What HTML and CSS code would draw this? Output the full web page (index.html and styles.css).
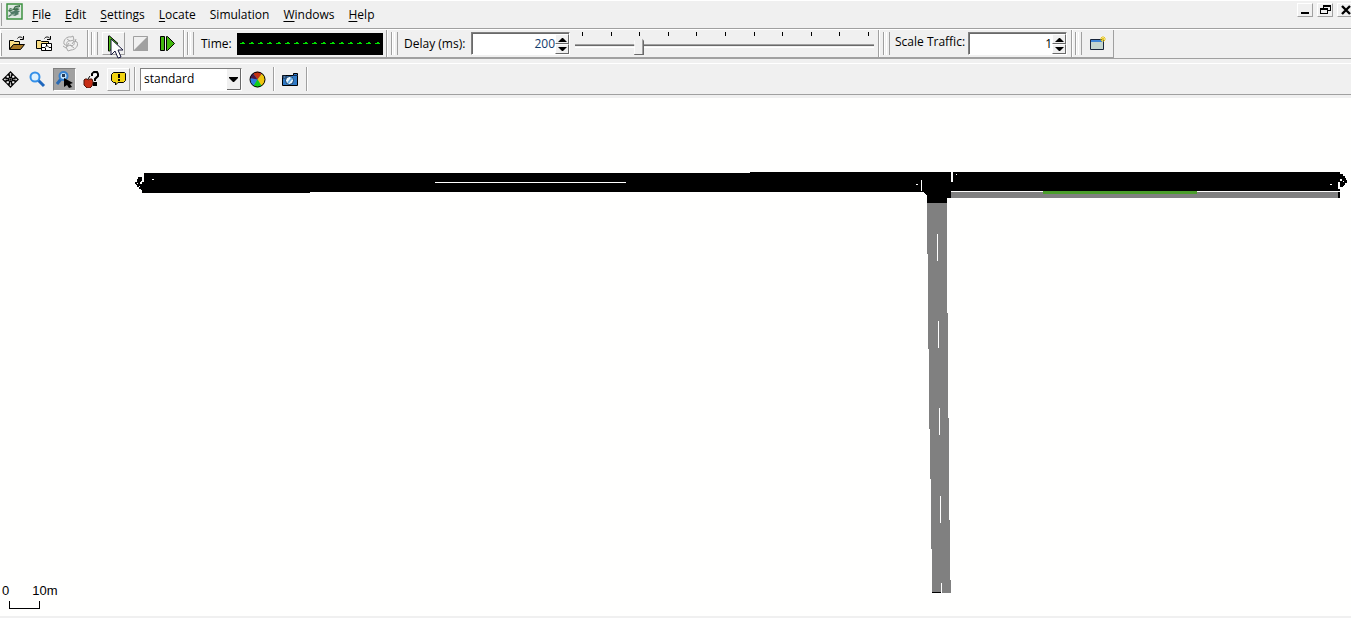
FILE: index.html
```html
<!DOCTYPE html>
<html lang="en">
<head>
<meta charset="utf-8">
<title>Traffic simulation</title>
<link rel="stylesheet" href="styles.css">
</head>
<body>
<header class="menubar">
  <svg class="app-icon" width="17" height="17" viewBox="0 0 17 17"><rect x="1" y="1" width="15" height="15" fill="#dfe9e2" stroke="#3c9140" stroke-width="1.5"/><path d="M2 8l2-3 3 1 2-3 5-1v2l-3 1 3 1-4 2-3-1-3 2z" fill="#3f6e4c"/><path d="M2 13l3-2-1-2 4-1 2-1 4 1-2 2 1 1-4 2-3-1-3 2z" fill="#4f7a66"/><path d="M3 6l4 1M9 5l4-1M5 12l4-1" stroke="#8fae9c"/></svg>
  <nav class="menus">
    <button class="menu"><u>F</u>ile</button>
    <button class="menu"><u>E</u>dit</button>
    <button class="menu"><u>S</u>ettings</button>
    <button class="menu"><u>L</u>ocate</button>
    <button class="menu">Simulation</button>
    <button class="menu"><u>W</u>indows</button>
    <button class="menu"><u>H</u>elp</button>
  </nav>
  <div class="window-buttons">
    <button class="window-button" aria-label="Minimize"><svg width="13" height="12"><path d="M3 8h8v2H3z"/></svg></button>
    <button class="window-button" aria-label="Restore"><svg width="13" height="12" fill="none" stroke="#000" shape-rendering="crispEdges"><path d="M5 1h8v2H5zM5 1h1v4H5zM12 1h1v6h-1zM10 6h3v1h-3zM2 4h8v2H2zM2 4h1v6H2zM9 4h1v6H9zM2 9h8v1H2z" fill="#000" stroke="none"/></svg></button>
    <button class="window-button" aria-label="Close"><svg width="13" height="12"><path d="M4 2l8 8M12 2l-8 8" stroke="#000" stroke-width="2.400"/></svg></button>
  </div>
</header>

<div class="toolbar main-toolbar">
  <div class="group files">
    <button class="tool" aria-label="Open simulation"><svg width="17" height="17" viewBox="0 0 17 17"><path d="M1.500 14V5.500h4l1 1h5V9.500H6z" fill="#f8dc83" stroke="#000"/><path d="M1.500 14.500l4-5h11l-4 5z" fill="#a87824" stroke="#000"/><path d="M9.500 3.500c1-2 4-2 5.500 0M15.500 1v3.500H12" fill="none" stroke="#000"/></svg></button>
    <button class="tool" aria-label="Open network"><svg width="17" height="17" viewBox="0 0 17 17"><path d="M1.500 13.500v-8h4l1 1h7v7z" fill="#f8dc83" stroke="#000"/><path d="M9.500 3.500c1-2 4-2 5.500 0M15.500 1v3.500H12" fill="none" stroke="#000"/><path d="M6.500 8.500h10v7h-10z" fill="#fff" stroke="#000"/><path d="M7 12.500h3l2-2 2 2h3M11.500 9v2M10.500 13v3" fill="none" stroke="#000"/></svg></button>
    <button class="tool" aria-label="Reload"><svg width="17" height="17" viewBox="0 0 17 17" fill="none" stroke="#a6a6a6"><path d="M2 9c-1-4 3-8 7-7l2-1 1 4-4 1c-2-1-4 2-3 4M15 7c2 4-2 8-6 8l-3 1-2-4 4-2c3 2 5-1 4-3M2 9l3 2 2-3M15 7l-3-1-2 3M5 4l3 2M12 13l-4-3M1 11l3 2M14 4l-1 3"/></svg></button>
  </div>
  <div class="group run">
    <span class="grip"></span>
    <button class="tool raised" aria-label="Run"><svg width="17" height="17" viewBox="0 0 17 17"><path d="M3.500 1v15h1l8.500-7.500L4.500 1z" fill="#4dbb16" stroke="#000"/></svg></button>
    <button class="tool" aria-label="Stop"><svg width="17" height="17" viewBox="0 0 17 17"><path d="M1.500 1.500h14v14h-14z" fill="#f0f0f0" stroke="#a0a0a0"/><path d="M16 1v15H1z" fill="#a0a0a0"/></svg></button>
    <button class="tool" aria-label="Step"><svg width="17" height="17" viewBox="0 0 17 17" fill="#43b80e" stroke="#000"><path d="M1.500 1.500h4v14h-4zM7.500 1.500v14h1l7-7-7-7z"/></svg></button>
    <svg class="pointer" width="14" height="22" viewBox="0 0 14 22"><path d="M1 1v16l4-4 3 7 3-1-3-7h5z" fill="#fff" stroke="#18183c"/></svg>
  </div>
  <div class="group time">
    <span class="grip"></span>
    <span class="time-label">Time:</span>
    <svg class="lcd" role="img" aria-label="Simulation time" width="146" height="22" shape-rendering="crispEdges">
      <rect width="146" height="22"/>
      <path d="M3 10.500h141" stroke="#00e000" stroke-dasharray="5 4"/>
      <path d="M5 9.500h139" stroke="#00e000" stroke-dasharray="2 7"/>
    </svg>
  </div>
  <div class="group delay">
    <span class="grip"></span>
    <label for="delay">Delay (ms):</label>
    <div class="spinner">
      <input id="delay" class="active" type="text" value="200">
      <div class="arrows">
        <button aria-label="Increase delay"><svg width="9" height="5"><path d="M0 5l4-4h1l4 4z"/></svg></button>
        <button aria-label="Decrease delay"><svg width="9" height="5"><path d="M0 0h9L5 4H4z"/></svg></button>
      </div>
    </div>
    <div class="slider">
      <div class="ticks"><i></i><i></i><i></i><i></i><i></i><i></i><i></i><i></i><i></i><i></i><i></i></div>
      <input type="range" min="0" max="1000" value="205" aria-label="Delay">
    </div>
  </div>
  <div class="group scale">
    <span class="grip"></span>
    <label for="scale">Scale Traffic:</label>
    <div class="spinner">
      <input id="scale" type="text" value="1">
      <div class="arrows">
        <button aria-label="Increase scale"><svg width="9" height="5"><path d="M0 5l4-4h1l4 4z"/></svg></button>
        <button aria-label="Decrease scale"><svg width="9" height="5"><path d="M0 0h9L5 4H4z"/></svg></button>
      </div>
    </div>
  </div>
  <div class="group views">
    <span class="grip"></span>
    <button class="tool" aria-label="New view"><svg width="17" height="17" viewBox="0 0 17 17"><path d="M1.500 4.500h13v10h-13z" fill="#c3d5cf" stroke="#17243a"/><path d="M2 5h11v2H2z" fill="#3e86d8"/><path d="M14 1v6M11 4h6M12 2l4 4M16 2l-4 4" stroke="#e8c71c"/></svg></button>
  </div>
</div>

<div class="toolbar view-toolbar">
  <button class="tool" aria-label="Recenter view"><svg width="17" height="17" viewBox="0 0 17 17" fill="#fff" stroke="#000" stroke-width="1.300"><path d="M8.500 1L5.500 4h2v2.500h2V4h2zM8.500 16l-3-3h2v-2.500h2V13h2zM1 8.500l3-3v2h2.500v2H4v2zM16 8.500l-3-3v2h-2.500v2H13v2z"/><path d="M8 8h1v1H8z"/></svg></button>
  <button class="tool" aria-label="Edit viewport"><svg width="17" height="17" viewBox="0 0 17 17"><path d="M9 9l6 6" stroke="#1f67bd" stroke-width="3"/><circle cx="6" cy="6" r="4.500" fill="#dff1fd" stroke="#3590e8" stroke-width="2"/></svg></button>
  <button class="tool pressed" aria-label="Zoom style"><svg width="17" height="17" viewBox="0 0 17 17"><path d="M5 8l-4 5" stroke="#2769b4" stroke-width="3"/><circle cx="7.500" cy="5" r="4" fill="#c4e2f8" stroke="#3580cf" stroke-width="2"/><path d="M6 3h3v3H6z" fill="#263c58"/><path d="M8 7v9l3-2 2 3 3-1-2-3 3-1z"/></svg></button>
  <button class="tool" aria-label="Show tooltips"><svg width="17" height="17" viewBox="0 0 17 17"><path d="M9 5V3l2-2h3l1 2v2l-3 3v2M11 12h2v2h-2z" fill="none" stroke="#000" stroke-width="2"/><path d="M10 3h1v2l3-2" stroke="#fff" fill="none"/><path d="M5 8l2-3" stroke="#000"/><path d="M2 8h2l1 1 2-1h2l1 3-1 4-2 2H4l-3-3V9z" fill="#c72e16" stroke="#4d160d"/></svg></button>
  <button class="tool raised" aria-label="Show messages"><svg width="17" height="17" viewBox="0 0 17 17"><path d="M3.500 1.500h11l1 1v7l-2 2H8L5.500 14v-2.500h-2l-2-2v-6z" fill="#f1d311" stroke="#000"/><path d="M8 3h2v4H8zM8 8h2v2H8z"/></svg></button>
  <span class="separator"></span>
  <div class="combo">
    <select aria-label="Coloring scheme"><option>standard</option></select>
    <svg class="combo-arrow" width="14" height="21" viewBox="0 0 14 21"><path d="M0 0h14v21H0z" fill="#f0f0f0"/><path d="M0 20.500h13.500V0" fill="none" stroke="#696969"/><path d="M2 8h9v1l-4 4H6L2 9z"/></svg>
  </div>
  <button class="tool" aria-label="Edit coloring schemes"><svg width="17" height="17" viewBox="0 0 17 17"><circle cx="8.500" cy="8.500" r="7.500" fill="#2f7fe0"/><path d="M8.500 8.500L4 2.500A7.500 7.500 0 0 1 13 2.500z" fill="#c43210"/><path d="M8.500 8.500L13 2.500A7.500 7.500 0 0 1 12.500 15z" fill="#eec50d"/><path d="M8.500 8.500L12.500 15A7.500 7.500 0 0 1 4.500 15z" fill="#0fcf16"/><path d="M8.500 8.500L1 7A7.500 7.500 0 0 1 4 2.500z" fill="#4c1742"/><circle cx="8.500" cy="8.500" r="7.500" fill="none" stroke="#000"/></svg></button>
  <span class="separator"></span>
  <button class="tool" aria-label="Make snapshot"><svg width="17" height="17" viewBox="0 0 17 17"><path d="M.5 4.500h11v-2h4v12H.5z" fill="#2f7ac7" stroke="#000"/><path d="M11 4.500h5M1 5h3v2H1z" stroke="#102c50" fill="#9ac7ef"/><circle cx="7.500" cy="9.500" r="4" fill="#e7f6ff" stroke="#06305d"/><path d="M6 12l4-5" stroke="#66aee8" stroke-width="2"/></svg></button>
  <span class="separator"></span>
</div>

<main class="canvas">
  <svg class="network" viewBox="0 0 1351 518" preserveAspectRatio="xMinYMin meet" shape-rendering="crispEdges">
    <path d="M951 94h388v6H951zM927 104h20v60l1 100 1 110 1 95 1 26h-19l-1-90-2-100-1-110-1-80z" fill="#808080"/>
    <path d="M144 75h606v-1h201v9h2v-9h387v19H951v7h-4v5H927v-7l-3-4H310v1H142V84h2z"/>
    <path d="M1043 93h154v3h-154z" fill="#4a9e2b"/>
    <path d="M951 74h2v10h-2zM921 82h1v11h-1zM435 84h191v1H435zM152 81h2v1h-2zM916 86h2v1h-2zM956 76h1v1h-1zM1330 86h2v1h-2z" fill="#fff"/>
    <path d="M937 136h1v27h-1zM938 223h1v27h-1zM939 310h1v27h-1zM940 398h1v27h-1zM941 485h1v10h-1z" fill="#fff"/>
    <path d="M932 494h9v1h-9zM1338 94h2v6h-2zM138 79h4v4h-1v1h-1v2h3v6h-2v-1h-2v-2h-2v-2h-1v-1h-1v-2h2v-3h1zM1340 76h3v2h2v2h1v2h1v3h-2v2h-1v1h-1v1h-3v-6h2v-2h-2z"/>
    <path d="M1338 84h2v7h-2zM137 85h1v1h-1zM139 88h1v1h-1zM1343 83h1v1h-1z" fill="#fff"/>
  </svg>
  <div class="ruler">
    <div class="ruler-labels"><span>0</span><span>10m</span></div>
    <div class="ruler-bar"></div>
  </div>
</main>
<footer class="statusbar"></footer>
</body>
</html>
```
FILE: styles.css
```css
* { box-sizing: border-box; }

body {
  margin: 0;
  min-height: 100vh;
  display: flex;
  flex-direction: column;
  overflow: hidden;
  background: #f0f0f0;
  color: #000;
  font: 12px/16px "Open Sans", "Noto Sans", sans-serif;
}

button, input, select { font: inherit; color: inherit; border: 0; padding: 0; margin: 0; }
button { background: #f0f0f0; }
svg { display: block; flex: none; }

.menubar {
  display: flex;
  align-items: flex-start;
  height: 29px;
  border-top: 1px solid #fff;
  border-bottom: 1px solid #a0a0a0;
  background: linear-gradient(#a0a0a0, #a0a0a0) 1px 2px / 1px 23px no-repeat;
}
.app-icon { margin: 2px 0 0 6px; }
.menus { display: flex; gap: 14px; padding: 6px 0 0 9px; }
.menu { background: none; white-space: nowrap; }
.menu u { text-underline-offset: 2px; }
.window-buttons { display: flex; gap: 4px; margin: 2px -2px 0 auto; }
.window-button {
  width: 16px;
  height: 14px;
  border: 1px solid;
  border-color: #fff #a0a0a0 #a0a0a0 #fff;
  overflow: hidden;
}

.toolbar { display: flex; border-top: 1px solid #fff; }
.main-toolbar { height: 30px; border-bottom: 1px solid #a0a0a0; }
.group {
  display: flex;
  align-items: center;
  height: 28px;
  padding-left: 3px;
  border-right: 1px solid #a0a0a0;
  border-bottom: 1px solid #a0a0a0;
  box-shadow: inset 1px 0 #fff;
}
.grip {
  flex: none;
  width: 7px;
  height: 23px;
  border: solid #a0a0a0;
  border-width: 0 1px;
  box-shadow: inset 1px 0 #fff, inset -2px 0 #f0f0f0, inset -3px 0 #fff;
}
.tool {
  display: flex;
  align-items: center;
  justify-content: center;
  flex: none;
  width: 23px;
  height: 23px;
  border: 1px solid transparent;
}
.raised { border-color: #fff #a0a0a0 #a0a0a0 #fff; }
.pressed { background: #a0a0a0; border-color: #808080 #fff #fff #808080; }

.files {
  gap: 4px;
  width: 88px;
  padding-left: 5px;
  background: linear-gradient(#a0a0a0, #a0a0a0) 1px 3px / 1px 23px no-repeat;
}
.run { position: relative; gap: 4px; width: 96px; }
.pointer { position: absolute; left: 22px; top: 8px; }
.time { width: 203px; }
.time-label { width: 36px; margin-left: 7px; }
.delay { width: 492px; padding-left: 4px; }
.delay label { width: 67px; margin-left: 6px; white-space: nowrap; }
.scale { width: 193px; padding-left: 4px; }
.scale label { width: 73px; margin-left: 5px; padding-bottom: 4px; white-space: nowrap; }
.views { gap: 4px; width: 42px; }

.spinner {
  display: flex;
  width: 99px;
  height: 23px;
  background: #fff;
  border: 1px solid;
  border-color: #808080 #fff #fff #808080;
  box-shadow: inset 1px 1px #696969;
}
.spinner input {
  flex: 1;
  min-width: 0;
  background: none;
  text-align: right;
  outline: 0;
}
.spinner .active { color: #123c6c; }
.arrows { display: flex; flex-direction: column; width: 14px; padding-top: 1px; }
.arrows button {
  display: flex;
  align-items: center;
  justify-content: center;
  flex: 1;
  border: 1px solid;
  border-color: #fff #696969 #696969 #fff;
}

.slider { display: grid; width: 299px; height: 23px; margin-left: 5px; }
.ticks, .slider input { grid-area: 1 / 1; }
.ticks { display: flex; justify-content: space-between; padding: 0 5px 0 7px; }
.ticks i { width: 1px; height: 4px; background: #000; }
.slider input { appearance: none; width: 100%; height: 23px; background: none; }
.slider input::-webkit-slider-runnable-track {
  height: 19px;
  margin-top: 4px;
  background: linear-gradient(#a0a0a0 0 1px, #696969 1px 2px, #f0f0f0 2px 3px, #fff 3px 4px) 0 8px / 100% 4px no-repeat;
}
.slider input::-webkit-slider-thumb {
  appearance: none;
  width: 10px;
  height: 19px;
  clip-path: polygon(0 5px, 4px 0, 5px 0, 10px 5px, 10px 19px, 0 19px);
  background:
    linear-gradient(45deg, transparent 4px, #696969 4px) 100% 0 / 5px 5px no-repeat,
    linear-gradient(#696969, #696969) 0 100% / 100% 1px no-repeat,
    linear-gradient(90deg, #fff 0 1px, #f0f0f0 1px 8px, #a0a0a0 8px 9px, #696969 9px);
}

.view-toolbar {
  align-items: center;
  gap: 4px;
  height: 32px;
  margin: 4px 0 0 -1px;
  border-bottom: 1px solid #a0a0a0;
}
.separator { width: 2px; height: 24px; border-left: 1px solid #a0a0a0; border-right: 1px solid #fff; }
.combo {
  display: flex;
  width: 102px;
  height: 23px;
  background: #fff;
  border: 1px solid;
  border-color: #808080 #fff #fff #808080;
}
.combo select { appearance: none; flex: 1; min-width: 0; padding-left: 3px; background: none; outline: 0; }

.canvas { position: relative; flex: 1; margin-top: 3px; background: #fffffe; }
.network { width: 100%; height: auto; }
.ruler {
  position: absolute;
  left: 2px;
  bottom: 7px;
  font: 13px/14px "Liberation Sans", Arial, sans-serif;
}
.ruler-labels { display: flex; gap: 23px; }
.ruler-bar { width: 31px; height: 8px; margin: 3px 0 0 7px; border: 1px solid #000; border-top: 0; }
.statusbar { height: 2px; background: #f0f0f0; }
```
